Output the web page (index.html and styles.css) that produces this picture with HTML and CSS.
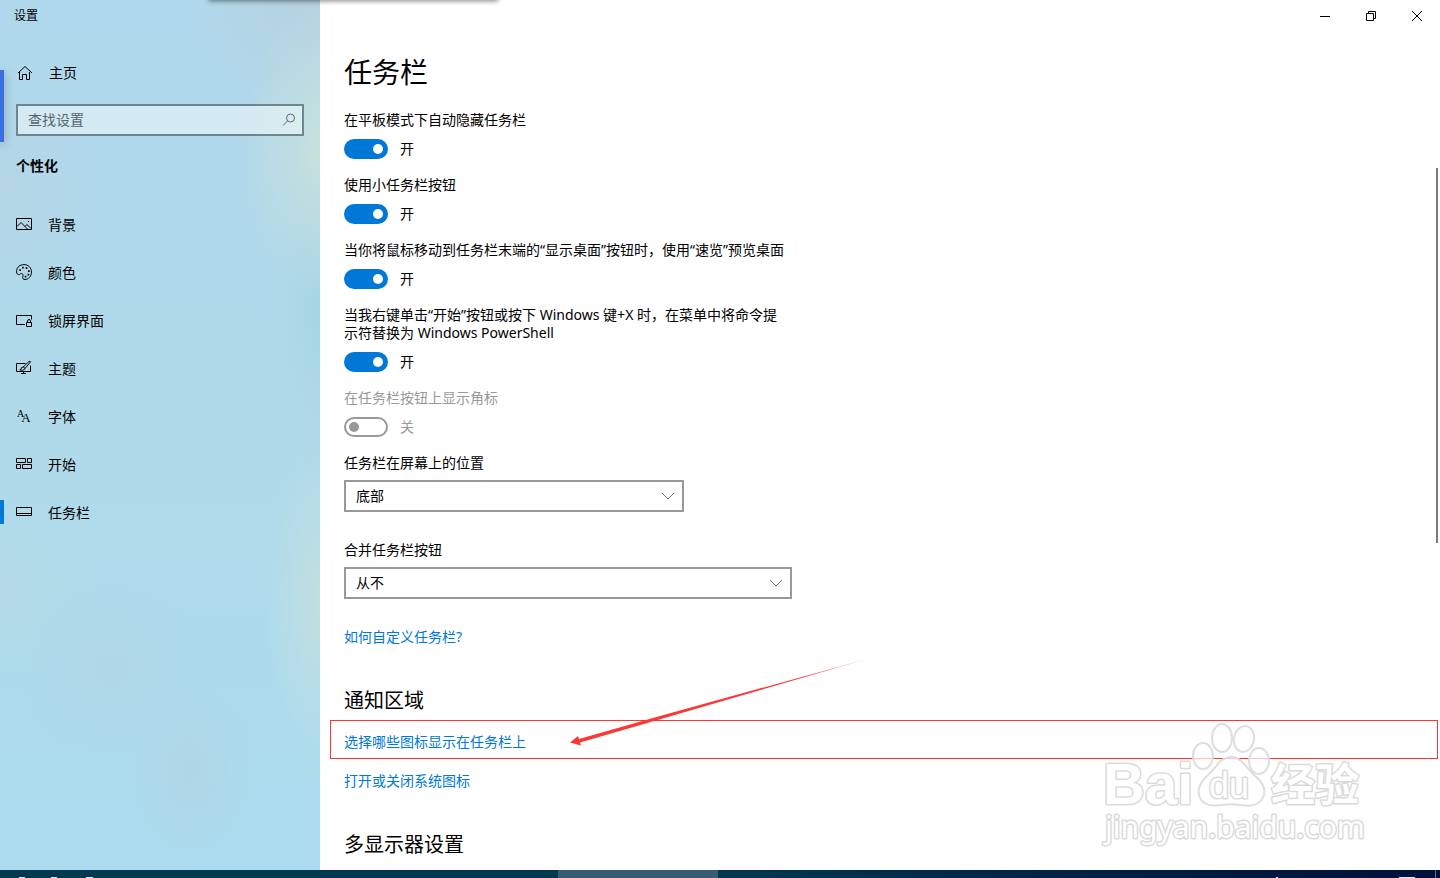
FILE: index.html
```html
<!DOCTYPE html>
<html lang="zh-CN">
<head>
    <meta charset="UTF-8">
    <meta name="viewport" content="width=device-width, initial-scale=1.0">
    <title>设置</title>
    <link rel="stylesheet" href="styles.css">
</head>
<body>
    <div class="window">
        <!-- Sidebar -->
        <aside class="sidebar">
            <div class="app-title">设置</div>
            <a class="home" href="#">
                <svg class="icon" viewBox="0 0 16 16"><path d="M1 8 8 1.500 15 8M2.500 7v7.500h3v-5h4v5h3V7"/></svg>
                <span>主页</span>
            </a>
            <div class="search">
                <input type="text" placeholder="查找设置" aria-label="查找设置">
                <svg class="search-icon" viewBox="0 0 14 14"><circle cx="8.500" cy="5" r="4"/><path d="M5.500 8 1 12.500"/></svg>
            </div>
            <h2 class="category">个性化</h2>
            <nav class="nav">
                <a href="#">
                    <svg class="icon" viewBox="0 0 16 16"><path d="M.5 2.500h15v11H.5zM1 10.500l4-4 6.500 6.500M9 10.500l2-2 4 4"/><path d="M12 5.500h1"/></svg>
                    <span>背景</span>
                </a>
                <a href="#">
                    <svg class="icon" viewBox="0 0 16 16"><path d="M.6 6.500C1 3 4 .6 8 .6c4.500 0 7.500 3.200 7.500 7.400S12.500 15.500 9 15.500c-2 0-2.700-1.200-2.200-2.700.5-1.600.2-3.300-1.300-3.300-1.300 0-1.600 1.500-3 1.200C.8 10.300.4 8.500.6 6.500z"/><path class="dots" d="M3.300 5.300h1.700v1.700H3.300zM6 2.800h1.700v1.700H6zM9.700 3.300h1.700V5H9.700zM12 6.300h1.700V8H12zM11.500 9.700h1.700v1.700h-1.700zM8.700 11.700h1.700v1.700H8.700z"/></svg>
                    <span>颜色</span>
                </a>
                <a href="#">
                    <svg class="icon" viewBox="0 0 16 16"><path d="M9 12.500H.5v-9h15v4M10.500 10.500h5v4h-5zM11.500 10.500V9q0-1.500 1.500-1.500T14.500 9v1.500"/></svg>
                    <span>锁屏界面</span>
                </a>
                <a href="#">
                    <svg class="icon" viewBox="0 0 16 16"><path d="M9.500 3.500h-9v8h14v-6M7.500 11.500v2M5 13.500h5"/><path d="M7.200 7 13 1.500q1.200-.8 1.600.3L9 8.500M7.200 7q-2 0-2.200 2 0 .7-1.200 1 3.500.5 4.700-.5.500-.5.500-1.200z"/></svg>
                    <span>主题</span>
                </a>
                <a href="#">
                    <svg class="icon letters" viewBox="0 0 16 16"><text x="1" y="9" font-size="10">A<tspan dx="-3" dy="5" font-size="13">A</tspan></text></svg>
                    <span>字体</span>
                </a>
                <a href="#">
                    <svg class="icon" viewBox="0 0 16 16"><path d="M.5 2.500h9v4h-9zM11.500 2.500h4v4h-4zM.5 8.500h4v4h-4zM6.500 8.500h9v4h-9z"/></svg>
                    <span>开始</span>
                </a>
                <a class="active" href="#">
                    <svg class="icon" viewBox="0 0 16 16"><path d="M.5 3.500h15v8H.5zM.5 9.500h15"/></svg>
                    <span>任务栏</span>
                </a>
            </nav>
        </aside>

        <!-- Content -->
        <main class="content">
            <div class="window-buttons">
                <button aria-label="最小化"><svg viewBox="0 0 10 10"><path d="M0 5.500h10"/></svg></button>
                <button aria-label="还原"><svg viewBox="0 0 10 10"><path d="M.5 2.500h7v7h-7zM2.500 2.500v-2h7v7h-2"/></svg></button>
                <button aria-label="关闭"><svg viewBox="0 0 10 10"><path d="M0 0l10 10M10 0 0 10"/></svg></button>
            </div>

            <h1>任务栏</h1>

            <div class="setting">
                <label for="tabletHide">在平板模式下自动隐藏任务栏</label>
                <div class="toggle"><input type="checkbox" id="tabletHide" checked><span>开</span></div>
            </div>
            <div class="setting">
                <label for="smallButtons">使用小任务栏按钮</label>
                <div class="toggle"><input type="checkbox" id="smallButtons" checked><span>开</span></div>
            </div>
            <div class="setting">
                <label for="peek">当你将鼠标移动到任务栏末端的“显示桌面”按钮时，使用“速览”预览桌面</label>
                <div class="toggle"><input type="checkbox" id="peek" checked><span>开</span></div>
            </div>
            <div class="setting">
                <label for="powershell">当我右键单击“开始”按钮或按下 Windows 键+X 时，在菜单中将命令提示符替换为 Windows PowerShell</label>
                <div class="toggle"><input type="checkbox" id="powershell" checked><span>开</span></div>
            </div>
            <div class="setting disabled">
                <label for="badges">在任务栏按钮上显示角标</label>
                <div class="toggle"><input type="checkbox" id="badges" disabled><span>关</span></div>
            </div>

            <div class="field">
                <label for="position">任务栏在屏幕上的位置</label>
                <div class="select position">
                    <select id="position">
                        <option>底部</option>
                    </select>
                    <svg class="chevron" viewBox="0 0 12 8"><path d="M0 1l6 6 6-6"/></svg>
                </div>
            </div>
            <div class="field">
                <label for="combine">合并任务栏按钮</label>
                <div class="select combine">
                    <select id="combine">
                        <option>从不</option>
                    </select>
                    <svg class="chevron" viewBox="0 0 12 8"><path d="M0 1l6 6 6-6"/></svg>
                </div>
            </div>
            <a class="link" href="#">如何自定义任务栏?</a>

            <h2>通知区域</h2>
            <div class="marked">
                <a class="link" href="#">选择哪些图标显示在任务栏上</a>
                <div class="mark-box"></div>
                <svg class="mark-arrow" viewBox="0 0 300 90">
                    <defs>
                        <linearGradient id="fade" x1="0" x2="1" y1="0" y2="0">
                            <stop offset="0.8" stop-color="#fb3836"/>
                            <stop offset="1" stop-color="#fb3836" stop-opacity="0.4"/>
                        </linearGradient>
                    </defs>
                    <path fill="url(#fade)" d="M0 83.500 8 77l1 3L90 57 297 0 91 60 10 83.500l1 3z"/>
                </svg>
            </div>
            <a class="link" href="#">打开或关闭系统图标</a>

            <h2>多显示器设置</h2>

            <div class="scrollbar"></div>

            <svg class="watermark" viewBox="0 0 270 130">
                <g class="shape" transform="translate(5 -4)">
                    <ellipse cx="98" cy="37" rx="10" ry="13"/>
                    <ellipse cx="117" cy="19" rx="10" ry="14"/>
                    <ellipse cx="139" cy="20" rx="10" ry="13" transform="rotate(12 139 20)"/>
                    <ellipse cx="154" cy="42" rx="10" ry="13"/>
                    <path d="M126 38c11 0 15 11 23 18 10 8 13 17 8 24-5 8-14 7-22 6-6-1-12-1-18 0-9 1-18 1-22-7-4-9 1-17 9-24 7-6 11-17 22-17z"/>
                </g>
                <text class="letter bold" x="3" y="81" font-size="58">Bai</text>
                <text class="letter du" x="109" y="75" font-size="36">du</text>
                <text class="letter cjk" x="171" y="78" font-size="44">经验</text>
                <text class="letter domain" x="5" y="115" font-size="30">jingyan.baidu.com</text>
            </svg>
        </main>

        <div class="edge-left"></div>
        <div class="edge-top"></div>
    </div>

    <!-- Taskbar -->
    <footer class="taskbar">
        <svg class="tray-left" viewBox="0 0 80 8"><path d="M0 7.500h6M32 7.500h6M67 7.500h7"/></svg>
        <div class="task"></div>
        <svg class="tray-right" viewBox="0 0 170 8"><path d="M6 7.500h2M129 7.500h16"/><path class="divider" d="M165.500 0v8"/></svg>
    </footer>
</body>
</html>
```
FILE: styles.css
```css
* {
    margin: 0;
    padding: 0;
    box-sizing: border-box;
}

body {
    display: flex;
    flex-direction: column;
    height: 100vh;
    overflow: hidden;
    background: white;
    color: #000;
    font-family: "Noto Sans", "Noto Sans CJK SC", sans-serif;
    font-size: 14px;
    line-height: 18px;
}

a {
    color: inherit;
    text-decoration: none;
}

input, select {
    font: inherit;
    color: inherit;
}

svg {
    display: block;
    fill: none;
    stroke: currentColor;
}

.window {
    position: relative;
    display: flex;
    flex: 1;
    min-height: 0;
    overflow: hidden;
}

/* Sidebar */
.sidebar {
    width: 320px;
    flex-shrink: 0;
    background:
        radial-gradient(ellipse 90px 150px at 330px 150px, rgba(204, 226, 218, 0.9), transparent),
        radial-gradient(ellipse 60px 160px at 325px 600px, rgba(196, 225, 222, 0.9), transparent),
        radial-gradient(ellipse 50px 170px at 320px 310px, rgba(162, 210, 222, 0.6), transparent),
        radial-gradient(circle at 300px 0, rgba(182, 208, 220, 0.8), transparent 110px),
        radial-gradient(circle at 0 190px, rgba(184, 212, 226, 0.6), transparent 100px),
        radial-gradient(circle at 0 590px, rgba(182, 218, 226, 0.7), transparent 90px),
        radial-gradient(ellipse 60px 90px at 190px 770px, rgba(176, 210, 226, 0.7), transparent),
        radial-gradient(circle at 110px 670px, rgba(176, 212, 228, 0.7), transparent 90px),
        linear-gradient(#b0d8ec, #b0daea 50%, #acdcee);
}

.app-title {
    padding: 7px 14px;
    font-size: 12px;
}

.home {
    display: flex;
    align-items: center;
    gap: 16px;
    margin-top: 22px;
    padding: 10px 17px;
}

.icon {
    width: 16px;
    height: 16px;
}

.icon .dots {
    fill: currentColor;
    stroke: none;
}

.letters {
    fill: currentColor;
    stroke: none;
    font-family: "Liberation Serif", serif;
}

.search {
    position: relative;
    margin: 12px 16px 0;
}

.search input {
    display: block;
    width: 100%;
    height: 32px;
    padding: 0 32px 2px 10px;
    border: 2px solid #6e868f;
    background: rgba(255, 255, 255, 0.45);
}

.search input::placeholder {
    color: #56656c;
    opacity: 1;
}

.search-icon {
    position: absolute;
    top: 9px;
    right: 8px;
    width: 14px;
    height: 14px;
    color: #5a6a70;
}

.category {
    padding: 21px 16px 26px;
    font-size: 14px;
    line-height: 18px;
}

.nav a {
    display: flex;
    align-items: center;
    gap: 16px;
    height: 48px;
    padding: 0 16px;
}

.nav .icon {
    margin-bottom: 2px;
}

.nav .active {
    position: relative;
}

.nav .active::before {
    content: "";
    position: absolute;
    left: 0;
    top: 11px;
    width: 4px;
    height: 24px;
    background: #0078d7;
}

/* Content */
.content {
    position: relative;
    flex: 1;
    min-width: 0;
    padding: 0 24px;
}

.window-buttons {
    display: flex;
    justify-content: flex-end;
    height: 32px;
    margin-right: -24px;
}

.window-buttons button {
    display: flex;
    align-items: center;
    justify-content: center;
    width: 46px;
    border: none;
    background: none;
}

.window-buttons svg {
    width: 10px;
    height: 10px;
}

h1 {
    margin: 20px 0 19px;
    font-size: 28px;
    font-weight: 400;
    line-height: 40px;
}

.content h2 {
    margin: 42px 0 19px;
    font-size: 20px;
    font-weight: 400;
    line-height: 26px;
}

.setting {
    max-width: 442px;
    margin-bottom: 17px;
}

.setting label,
.field label {
    display: block;
}

.toggle {
    display: flex;
    align-items: center;
    gap: 12px;
    height: 20px;
    margin-top: 10px;
}

.toggle input {
    display: flex;
    align-items: center;
    appearance: none;
    width: 44px;
    height: 20px;
    border: 2px solid #0078d7;
    border-radius: 10px;
    background: #0078d7;
}

.toggle input::before {
    content: "";
    width: 10px;
    height: 10px;
    margin-left: 27px;
    border-radius: 50%;
    background: white;
}

.disabled {
    color: #999;
}

.toggle input:disabled {
    border-color: #999;
    background: white;
}

.toggle input:disabled::before {
    margin-left: 3px;
    background: #999;
}

.field {
    margin-bottom: 29px;
}

.select {
    position: relative;
    margin-top: 8px;
}

.select.position {
    max-width: 340px;
}

.select.combine {
    max-width: 448px;
}

.select select {
    display: block;
    appearance: none;
    width: 100%;
    height: 32px;
    padding: 0 32px 0 10px;
    border: 2px solid #999;
    border-radius: 0;
    background: white;
}

.chevron {
    position: absolute;
    top: 12px;
    right: 10px;
    width: 12px;
    height: 8px;
    color: #777;
}

.link {
    display: block;
    width: fit-content;
    color: #0078d7;
}

.marked {
    position: relative;
    margin-bottom: 21px;
}

/* Red box and arrow over the link */
.mark-box {
    position: absolute;
    top: -13px;
    left: -14px;
    right: -22px;
    height: 39px;
    border: 1px solid #fb3836;
}

.mark-arrow {
    position: absolute;
    top: -74px;
    left: 226px;
    width: 300px;
    height: 90px;
    stroke: none;
}

.scrollbar {
    position: absolute;
    top: 168px;
    right: 2px;
    width: 2px;
    height: 375px;
    background: #7a7a7a;
}

.watermark {
    position: absolute;
    right: 70px;
    bottom: 17px;
    width: 270px;
    height: 130px;
}

.shape {
    fill: rgba(255, 255, 255, 0.7);
    stroke: #dedede;
    stroke-width: 2;
}

.letter {
    fill: white;
    stroke: #dadada;
    stroke-width: 3;
    stroke-linejoin: round;
    paint-order: stroke;
}

.bold,
.du {
    font-family: "Liberation Sans", sans-serif;
}

.bold,
.cjk {
    font-weight: 700;
}

/* Edges of other windows */
.edge-left {
    position: absolute;
    top: 70px;
    left: 0;
    width: 4px;
    height: 72px;
    background: #3a6fe0;
    box-shadow: 0 2px 10px rgba(0, 0, 0, 0.35);
}

.edge-top {
    position: absolute;
    top: -4px;
    left: 210px;
    width: 287px;
    height: 4px;
    box-shadow: 0 0 5px 1px rgba(0, 0, 0, 0.5);
}

/* Taskbar */
.taskbar {
    display: flex;
    height: 8px;
    padding-left: 19px;
    background: linear-gradient(90deg, #003a50, #003850 50%, #001f45 78%, #00103c);
    color: #dfe8ec;
}

.tray-left {
    width: 80px;
    height: 8px;
    margin-right: 459px;
}

.task {
    width: 160px;
    height: 8px;
    background: #365d71;
}

.tray-right {
    width: 170px;
    height: 8px;
    margin-left: auto;
}

.divider {
    stroke: #66708a;
}
```
